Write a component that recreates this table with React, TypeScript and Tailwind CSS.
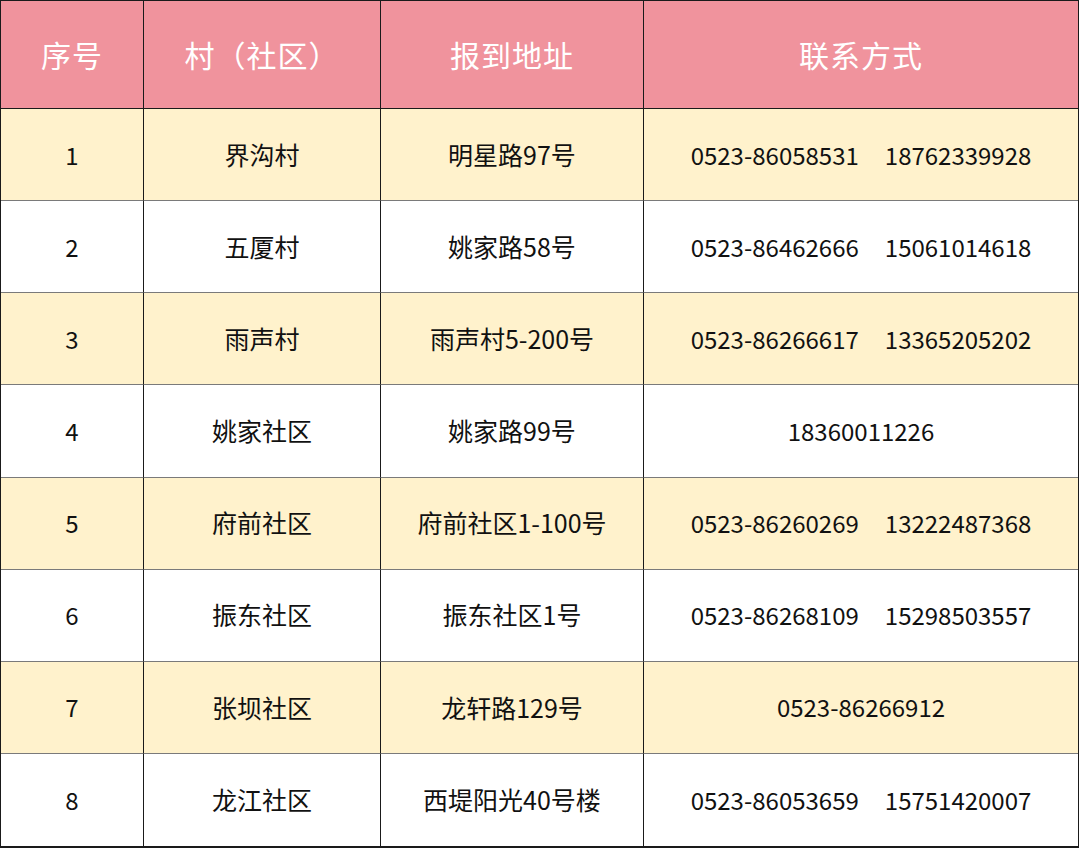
const ROWS: { no: string; village: string; address: string; phones: string[] }[] = [
  { no: "1", village: "界沟村", address: "明星路97号", phones: ["0523-86058531", "18762339928"] },
  { no: "2", village: "五厦村", address: "姚家路58号", phones: ["0523-86462666", "15061014618"] },
  { no: "3", village: "雨声村", address: "雨声村5-200号", phones: ["0523-86266617", "13365205202"] },
  { no: "4", village: "姚家社区", address: "姚家路99号", phones: ["18360011226"] },
  { no: "5", village: "府前社区", address: "府前社区1-100号", phones: ["0523-86260269", "13222487368"] },
  { no: "6", village: "振东社区", address: "振东社区1号", phones: ["0523-86268109", "15298503557"] },
  { no: "7", village: "张坝社区", address: "龙轩路129号", phones: ["0523-86266912"] },
  { no: "8", village: "龙江社区", address: "西堤阳光40号楼", phones: ["0523-86053659", "15751420007"] },
];

const HEADERS = ["序号", "村（社区）", "报到地址", "联系方式"];

export default function App() {
  return (
    <div
      className="w-[1080px] h-[848px] bg-white"
      style={{ fontFamily: '"Noto Sans CJK SC", "Noto Sans", sans-serif' }}
    >
      <div className="grid h-[848px] w-[1079px] grid-cols-[142px_237px_263px_1fr] grid-rows-[108px_repeat(8,1fr)] border border-[#1a1a1a] border-b-2">
        {HEADERS.map((h, i) => (
          <div
            key={h}
            className={`flex items-center justify-center bg-[#f0939d] text-[30px] text-white tracking-[1px] border-b border-[#1a1a1a] ${
              i > 0 ? "border-l border-l-[#1a1a1a]" : ""
            }`}
          >
            {h}
          </div>
        ))}
        {ROWS.map((r, ri) => {
          const bg = ri % 2 === 0 ? "bg-[#fff2cc]" : "bg-white";
          const line = ri < ROWS.length - 1 ? "border-b border-b-[#7a7a7a]" : "";
          return [
            <div key={`${r.no}-a`} className={`flex items-center justify-center text-[24px] text-[#111] ${bg} ${line}`}>
              {r.no}
            </div>,
            <div key={`${r.no}-b`} className={`flex items-center justify-center text-[25px] text-[#111] border-l border-l-[#1a1a1a] ${bg} ${line}`}>
              {r.village}
            </div>,
            <div key={`${r.no}-c`} className={`flex items-center justify-center text-[25px] text-[#111] border-l border-l-[#1a1a1a] ${bg} ${line}`}>
              {r.address}
            </div>,
            <div key={`${r.no}-d`} className={`flex items-center justify-center gap-[26px] text-[24px] text-[#111] border-l border-l-[#1a1a1a] ${bg} ${line}`}>
              {r.phones.map((p) => (
                <span key={p}>{p}</span>
              ))}
            </div>,
          ];
        })}
      </div>
    </div>
  );
}
